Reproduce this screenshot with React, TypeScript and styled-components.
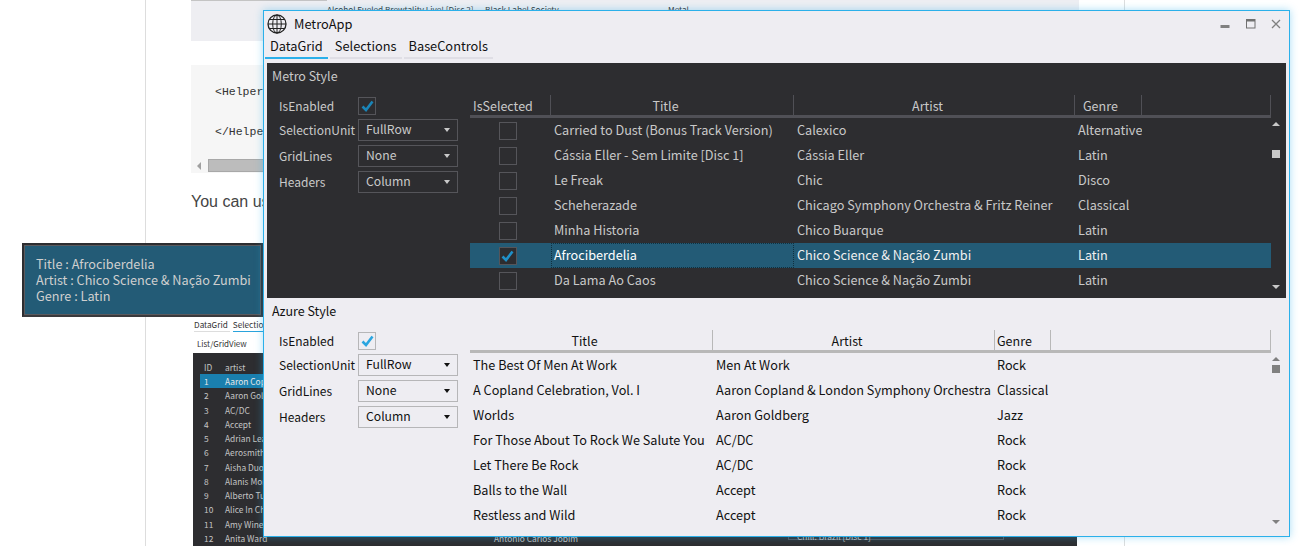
import styled, { createGlobalStyle } from "styled-components";

const uiFont = `"Noto Sans CJK SC", "Noto Sans", sans-serif`;

const GlobalStyle = createGlobalStyle`
  html, body {
    margin: 0;
    padding: 0;
    background: #ffffff;
    overflow: hidden;
  }
  * {
    box-sizing: border-box;
  }
`;

const Desktop = styled.div`
  position: relative;
  width: 1299px;
  height: 546px;
  overflow: hidden;
  background: #ffffff;
`;

/* web page behind the window */
const Article = styled.div`
  width: 980px;
  height: 546px;
  margin-left: 145px;
  padding-left: 45px;
  border-left: 1px solid #dddddd;
  border-right: 1px solid #dddddd;
  overflow: hidden;
`;

const PrevFigure = styled.div`
  width: 888px;
  height: 41px;
  background: #eeeef2;
  font: 8.2px/18px ${uiFont};
  color: #333;
  white-space: nowrap;
  display: grid;
  grid-template-columns: 136px 158px 183px 1fr;
  align-items: start;
`;

const PrevRule = styled.div`
  height: 1px;
  background: #c4c4c4;
`;

const CodeBlock = styled.div`
  width: 888px;
  height: 108px;
  margin-top: 24px;
  background: #f6f6f6;
  display: flex;
  flex-direction: column;
`;

const CodeText = styled.pre`
  flex: 1;
  margin: 0;
  padding: 17px 0 0 24px;
  font: 11.5px/20px "Liberation Mono", monospace;
  color: #333;
`;

const PageScroll = styled.div`
  height: 15px;
  padding: 0 0 0 6px;
  display: flex;
  align-items: center;
  gap: 7px;
`;

const PageScrollArrow = styled.div`
  width: 0;
  height: 0;
  border-top: 4px solid transparent;
  border-bottom: 4px solid transparent;
  border-right: 4px solid #a0a0a0;
`;

const PageScrollThumb = styled.div`
  width: 500px;
  height: 13px;
  background: #bcbcbc;
  border: 1px solid #a8a8a8;
`;

const Paragraph = styled.p`
  margin: 19px 0 0;
  font: 16px/20px "Liberation Sans", Arial, sans-serif;
  color: #444;
`;

const Shot = styled.div`
  width: 888px;
  margin-top: 106px;
  padding-left: 2px;
  font-family: ${uiFont};
`;

const ShotTabs = styled.div`
  display: flex;
  gap: 3px;
  height: 14px;
  padding-left: 1px;
  font-size: 8.2px;
  line-height: 12px;
  color: #333;
`;

const ShotTab = styled.div<{ $active?: boolean }>`
  padding: 0 2px 0 0;
  border-bottom: 1px solid ${(p) => (p.$active ? "#2aa3dc" : "#dddddd")};
`;

const ShotCaption = styled.div`
  height: 21px;
  padding: 5px 0 0 4px;
  font-size: 8px;
  line-height: 14px;
  color: #333;
`;

const ShotGrid = styled.div`
  width: 884px;
  height: 200px;
  padding: 7px 0 0 7px;
  background: #2d2d30;
  color: #c4c4c4;
  font-size: 8.4px;
`;

const ShotRow = styled.div<{ $active?: boolean }>`
  display: grid;
  grid-template-columns: 21px 269px 294px 1fr;
  height: 14.27px;
  line-height: 14px;
  padding-left: 4px;
  white-space: nowrap;
  background: ${(p) => (p.$active ? "#1a7fae" : "transparent")};
  color: ${(p) => (p.$active ? "#e8e8e8" : "inherit")};
`;

const ShotHeader = styled(ShotRow)`
  height: 14px;
`;

const ShotBox = styled.span`
  display: block;
  width: 216px;
  height: 9px;
  padding-left: 8px;
  line-height: 9px;
  border: 1px solid #55555a;
`;

/* the app window */
const Window = styled.div`
  position: absolute;
  left: 263px;
  top: 10px;
  width: 1027px;
  height: 527px;
  display: flex;
  flex-direction: column;
  background: #eeedf2;
  border: 1px solid #2bb0ea;
  box-shadow: 0 0 8px rgba(43, 176, 234, 0.4);
  font-family: ${uiFont};
  font-size: 12.7px;
`;

const TitleBar = styled.div`
  height: 26px;
  padding-left: 3px;
  display: flex;
  align-items: center;
  flex-shrink: 0;
`;

const WindowTitle = styled.div`
  flex: 1;
  margin-left: 7px;
  padding-bottom: 2px;
  color: #111;
  font-size: 12.8px;
`;

const WindowButton = styled.div`
  width: 25.5px;
  height: 26px;
  display: flex;
  align-items: center;
  justify-content: center;
`;

const Tabs = styled.div`
  height: 22px;
  padding-left: 1px;
  display: flex;
  gap: 2px;
  flex-shrink: 0;
`;

const Tab = styled.div<{ $active?: boolean }>`
  padding: 0 5px;
  font-size: 12.8px;
  line-height: 18px;
  color: #111;
  border-bottom: 2px solid ${(p) => (p.$active ? "#2bb0ea" : "#dfdee5")};
`;

const Panels = styled.div`
  flex: 1;
  margin-top: 4px;
  padding: 0 3px;
  display: flex;
  flex-direction: column;
`;

const Panel = styled.div<{ $dark?: boolean }>`
  height: ${(p) => (p.$dark ? "235px" : "238px")};
  padding-left: 5px;
  background: ${(p) => (p.$dark ? "#2d2d30" : "transparent")};
  color: ${(p) => (p.$dark ? "#c9c9c9" : "#111111")};
`;

const PanelTitle = styled.div`
  height: 32px;
  line-height: 26px;
  font-size: 12.5px;
`;

const PanelBody = styled.div`
  display: flex;
`;

const Form = styled.div`
  width: 198px;
  flex-shrink: 0;
  margin-top: 2px;
  padding-left: 7px;
  display: flex;
  flex-direction: column;
  gap: 4px;
`;

const FormRow = styled.div`
  display: flex;
  align-items: center;
`;

const FormLabel = styled.div`
  width: 79px;
  flex-shrink: 0;
  font-size: 12px;
  line-height: 17px;
  padding-bottom: 1px;
  white-space: nowrap;
`;

const CheckBox = styled.div<{ $dark?: boolean }>`
  width: 18px;
  height: 18px;
  flex-shrink: 0;
  display: flex;
  align-items: center;
  justify-content: center;
  background: ${(p) => (p.$dark ? "#2d2d30" : "transparent")};
  border: 1px solid ${(p) => (p.$dark ? "#55555a" : "#b6b6b8")};
`;

const Combo = styled.div<{ $dark?: boolean }>`
  width: 100px;
  height: 22px;
  padding: 0 7px;
  display: flex;
  align-items: center;
  justify-content: space-between;
  font-size: 12.2px;
  border: 1px solid ${(p) => (p.$dark ? "#55555a" : "#b6b6b8")};
`;

const ComboValue = styled.span`
  line-height: 18px;
  margin-top: -2px;
`;

const ComboArrow = styled.div`
  width: 0;
  height: 0;
  border-left: 3px solid transparent;
  border-right: 3px solid transparent;
  border-top: 4px solid currentColor;
`;

const Table = styled.div`
  width: 801px;
  flex-shrink: 0;
`;

const HeaderRow = styled.div<{ $columns: string; $dark?: boolean }>`
  display: grid;
  grid-template-columns: ${(p) => p.$columns};
  height: 23px;
  border-bottom: 3px solid ${(p) => (p.$dark ? "#505056" : "#b8b8b8")};
`;

const HeaderCell = styled.div<{ $dark?: boolean; $center?: boolean; $pad?: number }>`
  padding-left: ${(p) => p.$pad ?? 0}px;
  padding-right: ${(p) => (p.$center ? 13 : 0)}px;
  text-align: ${(p) => (p.$center ? "center" : "left")};
  line-height: 21px;
  font-size: 12.5px;
  border-right: 1px solid ${(p) => (p.$dark ? "#505056" : "#b8b8b8")};
`;

const DataRow = styled.div<{ $columns: string; $selected?: boolean }>`
  display: grid;
  grid-template-columns: ${(p) => p.$columns};
  height: 25px;
  font-size: 12.7px;
  background: ${(p) => (p.$selected ? "#235b76" : "transparent")};
  color: ${(p) => (p.$selected ? "#f0f0f0" : "inherit")};
`;

const DataCell = styled.div<{ $pad: number; $focused?: boolean }>`
  padding-left: ${(p) => p.$pad - (p.$focused ? 1 : 0)}px;
  white-space: nowrap;
  overflow: hidden;
  border: ${(p) => (p.$focused ? "1px dotted #10303f" : "none")};
  line-height: ${(p) => (p.$focused ? "22px" : "24px")};
  color: ${(p) => (p.$focused ? "#ffffff" : "inherit")};
`;

const CheckCell = styled.div`
  display: flex;
  align-items: center;
  justify-content: center;
  padding-right: 6px;
`;

const Scrollbar = styled.div<{ $dark?: boolean }>`
  width: 10px;
  margin-top: 23px;
  height: 174px;
  display: flex;
  flex-direction: column;
  align-items: center;
  color: ${(p) => (p.$dark ? "#c8c8c8" : "#808080")};
`;

const ScrollArrow = styled.div<{ $down?: boolean }>`
  width: 0;
  height: 0;
  margin-top: ${(p) => (p.$down ? "auto" : "4px")};
  margin-bottom: ${(p) => (p.$down ? "3px" : "0")};
  border-left: 4px solid transparent;
  border-right: 4px solid transparent;
  border-bottom: ${(p) => (p.$down ? "none" : "4px solid currentColor")};
  border-top: ${(p) => (p.$down ? "4px solid currentColor" : "none")};
`;

const ScrollThumb = styled.div<{ $offset: number }>`
  width: 8px;
  height: 8px;
  margin-top: ${(p) => p.$offset}px;
  background: currentColor;
`;

const Tooltip = styled.div`
  position: absolute;
  left: 22px;
  top: 243px;
  width: 241px;
  height: 74px;
  padding: 10px 0 0 11px;
  background: #235b76;
  border: 3px solid #2d2d30;
  border-bottom-color: #3a3a3d;
  outline: 1px solid #5a5a5e;
  outline-offset: -3px;
  color: #cfcfcf;
  font: 12.7px/16px ${uiFont};
  white-space: nowrap;
`;

const Check = ({ color }: { color: string }) => (
  <svg width="13" height="12" viewBox="0 0 13 12">
    <path d="M1.5 6.5 L5 10 L11.5 1.5" fill="none" stroke={color} strokeWidth="2.6" />
  </svg>
);

const GlobeIcon = () => (
  <svg width="20" height="20" viewBox="0 0 20 20" fill="none" stroke="#222" strokeWidth="1">
    <circle cx="10" cy="10" r="9" strokeWidth="1.3" />
    <ellipse cx="10" cy="10" rx="4.3" ry="9" />
    <path d="M10 1 V19 M1 10 H19 M2.4 5.5 H17.6 M2.4 14.5 H17.6" />
  </svg>
);

const MinIcon = () => (
  <svg width="10" height="10" viewBox="0 0 10 10">
    <rect x="0.5" y="6" width="9" height="3" fill="#808080" />
  </svg>
);

const MaxIcon = () => (
  <svg width="10" height="10" viewBox="0 0 10 10" fill="none" stroke="#707070">
    <rect x="0.5" y="0.5" width="8.5" height="8.5" />
    <path d="M0.5 1.5 H9" strokeWidth="2" />
  </svg>
);

const CloseIcon = () => (
  <svg width="10" height="10" viewBox="0 0 10 10" fill="none" stroke="#808080" strokeWidth="1.3">
    <path d="M1 1 L9 9 M9 1 L1 9" />
  </svg>
);

type Album = { title: string; artist: string; genre: string; selected?: boolean };

const metroAlbums: Album[] = [
  { title: "Carried to Dust (Bonus Track Version)", artist: "Calexico", genre: "Alternative" },
  { title: "Cássia Eller - Sem Limite [Disc 1]", artist: "Cássia Eller", genre: "Latin" },
  { title: "Le Freak", artist: "Chic", genre: "Disco" },
  { title: "Scheherazade", artist: "Chicago Symphony Orchestra & Fritz Reiner", genre: "Classical" },
  { title: "Minha Historia", artist: "Chico Buarque", genre: "Latin" },
  { title: "Afrociberdelia", artist: "Chico Science & Nação Zumbi", genre: "Latin", selected: true },
  { title: "Da Lama Ao Caos", artist: "Chico Science & Nação Zumbi", genre: "Latin" },
];

const azureAlbums: Album[] = [
  { title: "The Best Of Men At Work", artist: "Men At Work", genre: "Rock" },
  { title: "A Copland Celebration, Vol. I", artist: "Aaron Copland & London Symphony Orchestra", genre: "Classical" },
  { title: "Worlds", artist: "Aaron Goldberg", genre: "Jazz" },
  { title: "For Those About To Rock We Salute You", artist: "AC/DC", genre: "Rock" },
  { title: "Let There Be Rock", artist: "AC/DC", genre: "Rock" },
  { title: "Balls to the Wall", artist: "Accept", genre: "Rock" },
  { title: "Restless and Wild", artist: "Accept", genre: "Rock" },
];

const shotArtists = [
  "Aaron Copland",
  "Aaron Goldberg",
  "AC/DC",
  "Accept",
  "Adrian Leaper",
  "Aerosmith",
  "Aisha Duo",
  "Alanis Morissette",
  "Alberto Turco",
  "Alice In Chains",
  "Amy Winehouse",
  "Anita Ward",
];

const ControlForm = ({ dark }: { dark?: boolean }) => (
  <Form>
    <FormRow>
      <FormLabel>IsEnabled</FormLabel>
      <CheckBox $dark={dark}>
        <Check color={dark ? "#1a85b8" : "#2aa5e0"} />
      </CheckBox>
    </FormRow>
    {[
      ["SelectionUnit", "FullRow"],
      ["GridLines", "None"],
      ["Headers", "Column"],
    ].map(([label, value]) => (
      <FormRow key={label}>
        <FormLabel>{label}</FormLabel>
        <Combo $dark={dark}>
          <ComboValue>{value}</ComboValue>
          <ComboArrow />
        </Combo>
      </FormRow>
    ))}
  </Form>
);

const PanelScrollbar = ({ dark, offset }: { dark?: boolean; offset: number }) => (
  <Scrollbar $dark={dark}>
    <ScrollArrow />
    <ScrollThumb $offset={offset} />
    <ScrollArrow $down />
  </Scrollbar>
);

const metroColumns = "81px 243px 281px 67px 1fr";
const azureColumns = "243px 282px 56px 1fr";

export default function App() {
  return (
    <Desktop>
      <GlobalStyle />
      <Article>
        <PrevFigure>
          <PrevRule />
          <span>Alcohol Fueled Brewtality Live! [Disc 2]</span>
          <span>Black Label Society</span>
          <span>Metal</span>
        </PrevFigure>
        <CodeBlock>
          <CodeText>{"<Helper\n\n</Helpe"}</CodeText>
          <PageScroll>
            <PageScrollArrow />
            <PageScrollThumb />
          </PageScroll>
        </CodeBlock>
        <Paragraph>You can use</Paragraph>
        <Shot>
          <ShotTabs>
            <ShotTab>DataGrid</ShotTab>
            <ShotTab $active>Selections</ShotTab>
          </ShotTabs>
          <ShotCaption>List/GridView</ShotCaption>
          <ShotGrid>
            <ShotHeader>
              <span>ID</span>
              <span>artist</span>
            </ShotHeader>
            {shotArtists.map((artist, i) => (
              <ShotRow key={artist} $active={i === 0}>
                <span>{i + 1}</span>
                <span>{artist}</span>
                {i === 11 && <span>Antonio Carlos Jobim</span>}
                {i === 11 && <ShotBox>Chill: Brazil [Disc 1]</ShotBox>}
              </ShotRow>
            ))}
          </ShotGrid>
        </Shot>
      </Article>

      <Tooltip>
        Title : Afrociberdelia
        <br />
        Artist : Chico Science &amp; Nação Zumbi
        <br />
        Genre : Latin
      </Tooltip>

      <Window>
        <TitleBar>
          <GlobeIcon />
          <WindowTitle>MetroApp</WindowTitle>
          <WindowButton>
            <MinIcon />
          </WindowButton>
          <WindowButton>
            <MaxIcon />
          </WindowButton>
          <WindowButton>
            <CloseIcon />
          </WindowButton>
        </TitleBar>
        <Tabs>
          <Tab $active>DataGrid</Tab>
          <Tab>Selections</Tab>
          <Tab>BaseControls</Tab>
        </Tabs>
        <Panels>
          <Panel $dark>
            <PanelTitle>Metro Style</PanelTitle>
            <PanelBody>
              <ControlForm dark />
              <Table>
                <HeaderRow $columns={metroColumns} $dark>
                  <HeaderCell $dark $pad={3}>IsSelected</HeaderCell>
                  <HeaderCell $dark $center>Title</HeaderCell>
                  <HeaderCell $dark $center>Artist</HeaderCell>
                  <HeaderCell $dark $pad={8}>Genre</HeaderCell>
                  <HeaderCell $dark />
                </HeaderRow>
                {metroAlbums.map((album) => (
                  <DataRow key={album.title} $columns={metroColumns} $selected={album.selected}>
                    <CheckCell>
                      <CheckBox $dark>{album.selected && <Check color="#1f90c8" />}</CheckBox>
                    </CheckCell>
                    <DataCell $pad={3} $focused={album.selected}>{album.title}</DataCell>
                    <DataCell $pad={3}>{album.artist}</DataCell>
                    <DataCell $pad={3}>{album.genre}</DataCell>
                    <span />
                  </DataRow>
                ))}
              </Table>
              <PanelScrollbar dark offset={24} />
            </PanelBody>
          </Panel>
          <Panel>
            <PanelTitle>Azure Style</PanelTitle>
            <PanelBody>
              <ControlForm />
              <Table>
                <HeaderRow $columns={azureColumns}>
                  <HeaderCell $center>Title</HeaderCell>
                  <HeaderCell $center>Artist</HeaderCell>
                  <HeaderCell $pad={2}>Genre</HeaderCell>
                  <HeaderCell />
                </HeaderRow>
                {azureAlbums.map((album) => (
                  <DataRow key={album.title} $columns={azureColumns}>
                    <DataCell $pad={3}>{album.title}</DataCell>
                    <DataCell $pad={3}>{album.artist}</DataCell>
                    <DataCell $pad={2}>{album.genre}</DataCell>
                    <span />
                  </DataRow>
                ))}
              </Table>
              <PanelScrollbar offset={4} />
            </PanelBody>
          </Panel>
        </Panels>
      </Window>
    </Desktop>
  );
}
